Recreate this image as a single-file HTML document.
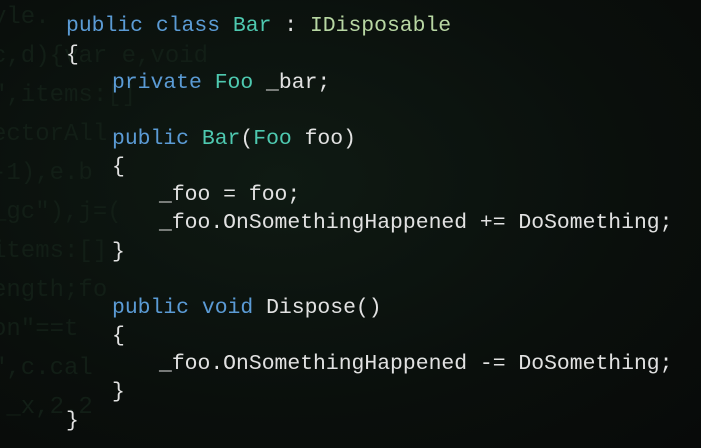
<!DOCTYPE html>
<html><head><meta charset="utf-8"><style>
html,body{margin:0;padding:0;width:701px;height:448px;overflow:hidden}
body{position:relative;background:radial-gradient(ellipse at 40% 40%,#0f1a13 0%,#0a0f0c 60%,#080a09 100%);font-family:"Liberation Mono",monospace}
.bg{position:absolute;left:-8px;font-size:24px;color:#121e16;white-space:pre;line-height:39px;top:-2px;font-family:"Liberation Mono",monospace;height:440px;overflow:hidden}
.l{position:absolute;font-size:21.4px;color:#e2e2e2;white-space:pre;line-height:28px}
.k{color:#5b9bd5}.t{color:#4ec9b0}.i{color:#b8d7a3}
</style></head><body>
<div class="bg">yle.
c,d){var e,void
",items:[]
ectorAll
-1),e.b
_gc"),j=(
items:[]
ength;fo
on"==t
",c.cal
 _x,2.2</div>
<div class="l" style="left:66px;top:12px"><span class="k">public</span> <span class="k">class</span> <span class="t">Bar</span> : <span class="i">IDisposable</span></div>
<div class="l" style="left:66px;top:41px">{</div>
<div class="l" style="left:112px;top:69px"><span class="k">private</span> <span class="t">Foo</span> _bar;</div>
<div class="l" style="left:112px;top:125px"><span class="k">public</span> <span class="t">Bar</span>(<span class="t">Foo</span> foo)</div>
<div class="l" style="left:112px;top:153px">{</div>
<div class="l" style="left:159px;top:181px">_foo = foo;</div>
<div class="l" style="left:159px;top:209px">_foo.OnSomethingHappened += DoSomething;</div>
<div class="l" style="left:112px;top:238px">}</div>
<div class="l" style="left:112px;top:294px"><span class="k">public</span> <span class="k">void</span> Dispose()</div>
<div class="l" style="left:112px;top:322px">{</div>
<div class="l" style="left:159px;top:350px">_foo.OnSomethingHappened -= DoSomething;</div>
<div class="l" style="left:112px;top:378px">}</div>
<div class="l" style="left:66px;top:407px">}</div>
</body></html>
